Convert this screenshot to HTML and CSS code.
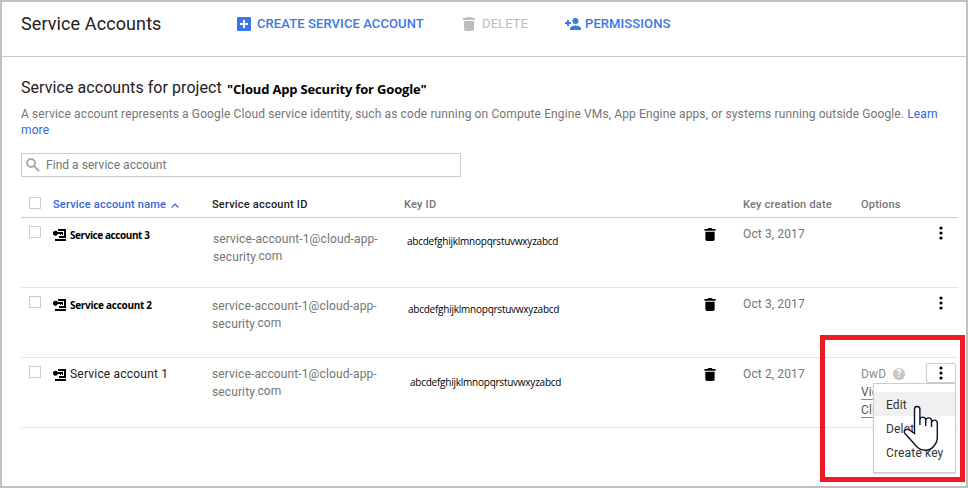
FILE: index.html
```html
<!DOCTYPE html>
<html lang="en">
<head>
<meta charset="utf-8">
<title>Service Accounts</title>
<link rel="stylesheet" href="styles.css">
</head>
<body>
<svg class="defs" width="0" height="0" aria-hidden="true">
  <symbol id="trash" viewBox="0 0 12 14"><path d="M0 1h3.2l1-1h3.6l1 1H12v2H0zM1 4h10v8.2a1.8 1.8 0 0 1-1.8 1.8H2.8A1.8 1.8 0 0 1 1 12.200z"/></symbol>
  <symbol id="dots" viewBox="0 0 4 14"><circle cx="2" cy="2" r="1.6"/><circle cx="2" cy="7" r="1.6"/><circle cx="2" cy="12" r="1.6"/></symbol>
  <symbol id="key" viewBox="0 0 14 12"><path d="M2.500 1.700a2.500 2.500 0 0 1 2.300 1.300H10v3H9V5H8v1H7V5H4.800A2.500 2.500 0 1 1 2.500 1.700zM5 0h8v9H6V7h5V2H5zM2 10h11v2H2z"/></symbol>
</svg>
<div class="frame">
  <header class="bar">
    <h1>Service Accounts</h1>
    <button class="action create"><svg width="14" height="14" viewBox="0 0 14 14"><rect width="14" height="14" rx="1" fill="#3b78e7"/><path d="M3 7h8M7 3v8" stroke="#fff" stroke-width="2"/></svg><span>CREATE SERVICE ACCOUNT</span></button>
    <button class="action delete"><svg width="12" height="14"><use href="#trash"/></svg><span>DELETE</span></button>
    <button class="action perms"><svg width="16" height="12" viewBox="0 0 16 12"><circle cx="10.500" cy="3" r="3"/><path d="M5 12v-1.500C5 8.500 8.500 7.500 10.500 7.500S16 8.500 16 10.500V12zM0 4h2V2h2v2h2v2H4v2H2V6H0z"/></svg><span>PERMISSIONS</span></button>
  </header>
  <main>
    <h2><span class="lead">Service accounts for project</span><b>"Cloud App Security for Google"</b></h2>
    <p class="intro">A service account represents a Google Cloud service identity, such as code running on Compute Engine VMs, App Engine apps, or systems running outside Google. <a>Learn<br>more</a></p>
    <div class="search"><svg width="14" height="14" viewBox="0 0 14 14"><circle cx="5" cy="5" r="3.900"/><path d="M8 8l5 5"/></svg><span>Find a service account</span></div>
    <div class="table">
      <div class="row head">
        <i class="check"></i>
        <div class="sort"><span>Service account name</span><svg width="8" height="5" viewBox="0 0 8 5"><path d="M.7 4.500L4 1.200l3.300 3.300"/></svg></div>
        <div class="strong">Service account ID</div><div>Key ID</div><div></div><div class="created">Key creation date</div><div>Options</div>
      </div>
      <div class="row">
        <i class="check"></i>
        <div class="name edited first"><svg width="14" height="12"><use href="#key"/></svg><span>Service account 3</span></div>
        <div class="id first">service-account-1@cloud-app-<br>security<small>.</small><span class="tld">com</span></div>
        <div class="key">abcdefghijklmnopqrstuvwxyzabcd</div>
        <svg class="bin" width="12" height="13"><use href="#trash"/></svg>
        <div class="date">Oct 3, 2017</div>
        <div class="options"><button class="more"><svg width="4" height="14"><use href="#dots"/></svg></button></div>
      </div>
      <div class="row">
        <i class="check"></i>
        <div class="name edited"><svg width="14" height="12"><use href="#key"/></svg><span>Service account 2</span></div>
        <div class="id second">service-account-1@cloud-app-<br>security<small>.</small><span class="tld">com</span></div>
        <div class="key second">abcdefghijklmnopqrstuvwxyzabcd</div>
        <svg class="bin" width="12" height="13"><use href="#trash"/></svg>
        <div class="date">Oct 3, 2017</div>
        <div class="options"><button class="more"><svg width="4" height="14"><use href="#dots"/></svg></button></div>
      </div>
      <div class="row">
        <i class="check"></i>
        <div class="name"><svg width="14" height="12"><use href="#key"/></svg><span>Service account 1</span></div>
        <div class="id">service-account-1@cloud-app-<br>security<small>.</small><span class="tld">com</span></div>
        <div class="key third">abcdefghijklmnopqrstuvwxyzabcd</div>
        <svg class="bin" width="12" height="13"><use href="#trash"/></svg>
        <div class="date">Oct 2, 2017</div>
        <div class="options">
          <div class="links"><div class="dwd">DwD <span class="help">?</span></div><div><u>Vie</u></div><div><u>Clie</u></div></div>
          <button class="more open"><svg width="4" height="14"><use href="#dots"/></svg></button>
          <div class="menu"><div class="hover">Edit</div><div>Delete</div><div>Create key</div></div>
        </div>
      </div>
    </div>
  </main>
  <div class="highlight"></div>
  <svg class="cursor" width="40" height="50" viewBox="0 0 40 50"><path d="M13.500 30.500V6.200a2.700 2.700 0 0 1 5.400 0V22V17a2.900 2.900 0 0 1 5.800 0V23V17.800a2.900 2.900 0 0 1 5.800 0V24V20a2.900 2.900 0 0 1 5.800 0V35c0 4-1.500 6-4 8.800-3.500 4.500-11.500 4.500-15.300 1C13.500 41.500 9.500 36.500 3.800 30.200 1.800 27.500 5.500 25 8.500 27z"/></svg>
</div>
</body>
</html>
```
FILE: styles.css
```css
* { box-sizing: border-box; }
body { margin: 0; background: #fff; font: 12px/18px Roboto, "Liberation Sans", sans-serif; letter-spacing: .12px; color: #757575; }
.defs { position: absolute; }
.frame { position: relative; width: 968px; height: 488px; border: 2px solid #c0c0c0; overflow: hidden; }
h1, h2, p { margin: 0; font-weight: 400; }
button { border: 0; background: none; padding: 0; font: inherit; color: inherit; letter-spacing: inherit; }
svg { display: block; flex: none; fill: currentColor; }

.bar { height: 55px; display: flex; align-items: flex-start; border-bottom: 1px solid #c8c8c8; padding: 11px 0 0 19px; white-space: nowrap; }
h1 { width: 216px; font-size: 18px; line-height: 22px; letter-spacing: .1px; color: #212121; }
.action { display: flex; align-items: center; height: 22px; font-size: 13px; font-weight: 500; letter-spacing: .1px; }
.action.create { width: 226px; gap: 6px; color: #3b78e7; }
.action.delete { width: 102px; gap: 7px; color: #bdbdbd; font-weight: 400; }
.action.perms { gap: 4px; color: #3b78e7; }

main { padding: 20px 8px 0 19px; }
h2 { display: flex; height: 24px; font-size: 16px; line-height: 22px; color: #212121; white-space: nowrap; }
.lead { width: 206px; letter-spacing: .06px; }
h2 b { font: 700 13px/25px "Open Sans", "Noto Sans", sans-serif; letter-spacing: -.17px; color: #000; }
.intro { margin-top: 4px; height: 36px; line-height: 16px; padding-top: 1px; white-space: nowrap; }
.intro a { color: #3367d6; }
.search { display: flex; align-items: center; gap: 6px; width: 440px; height: 24px; margin-top: 12px; padding-left: 4px; border: 1px solid #ccc; letter-spacing: .04px; }
.search svg { fill: none; stroke: #aaa; stroke-width: 2; }

.table { padding-top: 12px; }
.row { display: grid; grid-template-columns: 32px 159px 192px 299px 40px 118px 97px; height: 70px; border-bottom: 1px solid #e4e4e4; white-space: nowrap; }
.row.head { height: 29px; border-color: #ccc; font-size: 11px; font-weight: 500; line-height: 32px; letter-spacing: .21px; }
.check { width: 12px; height: 12px; margin: 8px 0 0 8px; border: 1px solid #ccc; }
.sort { display: flex; align-items: center; gap: 5px; color: #3367d6; }
.sort svg { fill: none; stroke: #3367d6; stroke-width: 1.200; }
.strong { color: #212121; }
.name { display: flex; gap: 3px; padding-top: 7px; color: #212121; letter-spacing: .2px; }
.name svg { margin-top: 4px; color: #000; }
.edited { color: #000; font: 700 10px/20px "Open Sans", "Noto Sans", sans-serif; letter-spacing: -.29px; }
.edited.first { letter-spacing: -.42px; }
.id { padding-top: 7px; }
.id.first { padding: 12px 0 0 1px; }
.id.second { padding-top: 9px; }
.id small { font-size: 9px; }
.tld { display: inline-block; line-height: 16px; vertical-align: 1px; letter-spacing: 0; }
.key { padding: 14px 0 0 3px; color: #000; font: 10px/18px "Open Sans", "Noto Sans", sans-serif; letter-spacing: -.24px; }
.key.second { padding: 12px 0 0 4px; }
.key.third { padding: 15px 0 0 6px; }
.bin { margin: 10px 0 0 1px; color: #000; }
.date { padding-top: 7px; }
.options { position: relative; display: flex; justify-content: flex-end; }
.more { display: grid; place-items: center; width: 30px; height: 20px; margin: 5px 2px 0 0; padding-right: 1px; color: #000; }
.more.open { border: 1px solid #ccc; border-radius: 2px; box-shadow: 0 1px 1px #ddd; }
.links { flex: 1; padding-top: 7px; }
.dwd { display: flex; align-items: center; gap: 7px; color: #8c8c8c; }
.help { width: 12px; height: 12px; border-radius: 50%; background: #c6c6c6; color: #fff; font-size: 10px; font-weight: 700; line-height: 12px; text-align: center; }
u { text-decoration: none; display: inline-block; height: 17px; border-bottom: 1px solid #888; color: #555; }
.menu { position: absolute; z-index: 2; right: 2px; top: 25px; width: 83px; height: 90px; padding-top: 8px; border: 1px solid #ccc; background: #fff; box-shadow: 0 1px 1px #ddd; color: #333; line-height: 26px; letter-spacing: .16px; }
.menu div { height: 24px; padding-left: 12px; }
.menu .hover { background: #f0f0f0; }
.highlight { position: absolute; left: 818px; top: 333px; width: 145px; height: 147px; border: 5px solid #ed1c24; }
.cursor { position: absolute; z-index: 3; left: 899px; top: 401px; fill: #fff; stroke: #10102a; stroke-width: 1.400; }
```
